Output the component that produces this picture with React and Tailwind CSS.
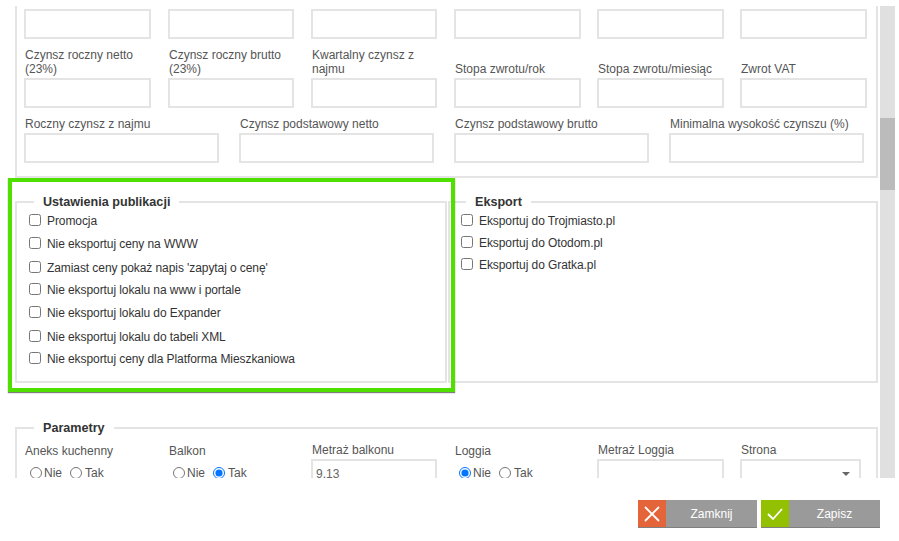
const grid6 = "grid grid-cols-[144px_143px_143px_143px_143px_127px]";
const widths = ["w-[127px]", "w-[126px]", "w-[126px]", "w-[127px]", "w-[127px]", "w-[127px]"];

const Label = ({ children, className = "" }) => (
  <label className={`block pl-[1px] text-[12px] leading-[14px] text-[#555] ${className}`}>{children}</label>
);

const Field = ({ label, value, className = "w-[127px]" }) => (
  <div className="flex flex-col">
    <Label>{label}</Label>
    <input
      readOnly
      value={value || ""}
      className={`${className} mt-[2px] h-[30px] border-2 border-[#e4e4e4] bg-white px-[3px] text-[12px] text-[#666] outline-none`}
    />
  </div>
);

const Check = ({ label, className = "" }) => (
  <label className={`flex items-start text-[12px] leading-[14px] tracking-[-0.08px] text-[#333] ${className}`}>
    <input type="checkbox" className="m-0 mr-[6px] h-[12px] w-[12px]" />
    {label}
  </label>
);

const Radios = ({ name, checked, className = "pl-[5px]" }) => (
  <div className={`mt-[6px] flex items-center text-[12px] text-[#555] ${className}`}>
    <input type="radio" name={name} readOnly checked={checked === "Nie"} className="m-0 mr-[2px] h-[12px] w-[12px]" />
    <span className="mr-[8px]">Nie</span>
    <input type="radio" name={name} readOnly checked={checked === "Tak"} className="m-0 mr-[3px] h-[12px] w-[12px]" />
    <span>Tak</span>
  </div>
);

const Legend = ({ children, className = "ml-[17px]" }) => (
  <legend className={`${className} px-[9px] text-[12.6px] leading-[14px] font-bold text-[#333]`}>{children}</legend>
);

const row2 = [
  "Czynsz roczny netto (23%)",
  "Czynsz roczny brutto (23%)",
  "Kwartalny czynsz z najmu",
  "Stopa zwrotu/rok",
  "Stopa zwrotu/miesiąc",
  "Zwrot VAT",
];

const publikacja = [
  ["Promocja", "h-[23px]"],
  ["Nie eksportuj ceny na WWW", "h-[24px]"],
  ["Zamiast ceny pokaż napis 'zapytaj o cenę'", "h-[22px]"],
  ["Nie eksportuj lokalu na www i portale", "h-[23px]"],
  ["Nie eksportuj lokalu do Expander", "h-[24px]"],
  ["Nie eksportuj lokalu do tabeli XML", "h-[22px]"],
  ["Nie eksportuj ceny dla Platforma Mieszkaniowa", "h-[22px]"],
];

export default function App() {
  return (
    <div className="relative h-[541px] w-[899px] overflow-hidden bg-white font-['Liberation_Sans',Arial,sans-serif]">
      <div className="flex h-[478px] pt-[6px]">
        <div className="w-[880px] overflow-hidden pl-[15px]">
          {/* top section, scrolled off */}
          <div className="h-[172px] w-[863px] border-x-2 border-b-2 border-[#e4e4e4] pt-[3px] pl-[7px]">
            <div className={grid6}>
              {widths.map((w, i) => (
                <input key={i} readOnly className={`${w} h-[30px] border-2 border-[#e4e4e4]`} />
              ))}
            </div>
            <div className={`mt-[9px] ${grid6}`}>
              {row2.map((label, i) => (
                <div key={label} className="flex h-[60px] w-[127px] flex-col justify-end">
                  <Label>{label}</Label>
                  <input readOnly className={`${widths[i]} mt-[2px] h-[30px] border-2 border-[#e4e4e4]`} />
                </div>
              ))}
            </div>
            <div className="mt-[9px] grid grid-cols-[215px_215px_215px_195px]">
              {["Roczny czynsz z najmu", "Czynsz podstawowy netto", "Czynsz podstawowy brutto", "Minimalna wysokość czynszu (%)"].map((l) => (
                <Field key={l} label={l} className="w-[195px]" />
              ))}
            </div>
          </div>

          <div className="mt-[17px] flex h-[188px] w-[863px]">
            <fieldset className="h-[188px] w-[432px] border-2 border-[#e4e4e4]">
              <Legend>Ustawienia publikacji</Legend>
              <div className="pt-[5px] pl-[12px]">
                {publikacja.map(([label, h]) => (
                  <Check key={label} label={label} className={h} />
                ))}
              </div>
            </fieldset>
            <fieldset className="ml-[1px] h-[188px] w-[430px] border-2 border-[#e4e4e4]">
              <Legend className="ml-[16px]">Eksport</Legend>
              <div className="pt-[5px] pl-[11px]">
                <Check label="Eksportuj do Trojmiasto.pl" className="h-[22px]" />
                <Check label="Eksportuj do Otodom.pl" className="h-[22px]" />
                <Check label="Eksportuj do Gratka.pl" className="h-[22px]" />
              </div>
            </fieldset>
          </div>

          <fieldset className="mt-[38px] w-[863px] border-2 border-[#e4e4e4] pt-[8px] pl-[7px]">
            <Legend className="ml-[10px]">Parametry</Legend>
            <div className={grid6}>
              <div className="pt-[1px]">
                <Label>Aneks kuchenny</Label>
                <Radios name="aneks" className="pl-[6px]" />
              </div>
              <div className="pt-[1px]">
                <Label>Balkon</Label>
                <Radios name="balkon" checked="Tak" />
              </div>
              <Field label="Metraż balkonu" value="9,13" className="w-[126px]" />
              <div className="pt-[1px]">
                <Label>Loggia</Label>
                <Radios name="loggia" checked="Nie" />
              </div>
              <Field label="Metraż Loggia" className="w-[127px]" />
              <div>
                <Label>Strona</Label>
                <div className="relative mt-[2px] h-[30px] w-[121px] border-2 border-[#e4e4e4]">
                  <span className="absolute top-[11px] right-[9px] h-0 w-0 border-x-[4px] border-t-[4px] border-x-transparent border-t-[#666]" />
                </div>
              </div>
            </div>
          </fieldset>
        </div>

        <div className="w-[15px] bg-[#e0e0e0] pt-[112px]">
          <div className="h-[72px] w-full bg-[#bbbbbb]" />
        </div>
      </div>

      <div className="mt-[22px] flex w-[880px] justify-end gap-[4px]">
        <button className="flex h-[28px] w-[119px] items-center border-b border-[#808080] bg-[#9a9a9a] text-[12px] text-white">
          <span className="flex h-full w-[28px] items-center justify-center bg-[#e5653a]">
            <svg width="16" height="16" viewBox="0 0 16 16" fill="none" stroke="white" strokeWidth="1.8"><path d="M1 1l14 14M15 1L1 15" /></svg>
          </span>
          <span className="flex-1 text-center">Zamknij</span>
        </button>
        <button className="flex h-[28px] w-[119px] items-center border-b border-[#808080] bg-[#9a9a9a] text-[12px] text-white">
          <span className="flex h-full w-[28px] items-center justify-center bg-[#93c000]">
            <svg width="16" height="12" viewBox="0 0 16 12" fill="none" stroke="white" strokeWidth="1.8"><path d="M1 6l5 5L15 1" /></svg>
          </span>
          <span className="flex-1 text-center">Zapisz</span>
        </button>
      </div>

      {/* green highlight annotation */}
      <div className="pointer-events-none absolute top-[178px] left-[8px] h-[214px] w-[447px] border-[4px] border-[#4fe000] shadow-[0_1px_1px_rgba(0,0,0,0.5)]" />
    </div>
  );
}
